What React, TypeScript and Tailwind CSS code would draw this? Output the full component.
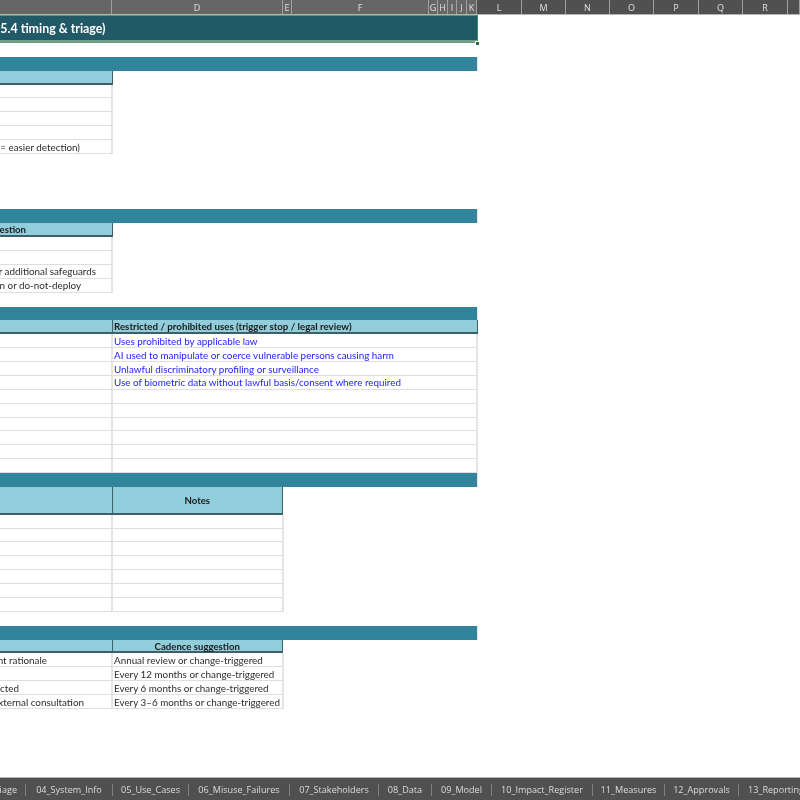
import type { ReactNode } from "react";

const columns = [
  { label: "", w: "w-[112px]", on: true },
  { label: "D", w: "w-[171px]", on: true },
  { label: "E", w: "w-[9px]", on: true },
  { label: "F", w: "w-[137px]", on: true },
  { label: "G", w: "w-[9px]", on: true },
  { label: "H", w: "w-[10px]", on: true },
  { label: "I", w: "w-[9px]", on: true },
  { label: "J", w: "w-[10px]", on: true },
  { label: "K", w: "w-[10px]", on: true },
  { label: "L", w: "w-[45px]", on: false },
  { label: "M", w: "w-[44px]", on: false },
  { label: "N", w: "w-[44px]", on: false },
  { label: "O", w: "w-[44px]", on: false },
  { label: "P", w: "w-[45px]", on: false },
  { label: "Q", w: "w-[44px]", on: false },
  { label: "R", w: "w-[45px]", on: false },
  { label: "", w: "w-[12px]", on: false },
];

const tabs = [
  { name: "iage", w: "w-[26px]", clip: true },
  { name: "04_System_Info", w: "w-[87px]" },
  { name: "05_Use_Cases", w: "w-[76px]" },
  { name: "06_Misuse_Failures", w: "w-[101px]" },
  { name: "07_Stakeholders", w: "w-[89px]" },
  { name: "08_Data", w: "w-[53px]" },
  { name: "09_Model", w: "w-[60px]" },
  { name: "10_Impact_Register", w: "w-[101px]" },
  { name: "11_Measures", w: "w-[72px]" },
  { name: "12_Approvals", w: "w-[74px]" },
];

const row = "h-[13.875px] shrink-0 flex";

function Blank({ n = 1 }: { n?: number }) {
  return <div className="shrink-0" style={{ height: n * 13.875 }} />;
}

function Bar() {
  return <div className="h-[13.875px] shrink-0 w-[477.5px] bg-[#31849b] border-r border-r-[#e4e4e4]" />;
}

// text that is cut off by the left edge of the window, so it hangs from its right end
function Clipped({ children, end, bold }: { children?: ReactNode; end: string; bold?: boolean }) {
  return (
    <div className={`${end} h-full flex justify-end items-center overflow-hidden whitespace-nowrap ${bold ? "font-bold" : ""}`}>
      <span className="shrink-0">{children}</span>
    </div>
  );
}

function Head({ children, w, center }: { children?: ReactNode; w: string; center?: boolean }) {
  return (
    <div className={`${w} h-full bg-[#92cddc] border-b-2 border-b-[#3f5f68] border-r border-r-[#3f5f68] flex items-center pt-[2px] font-bold text-[9.6px] text-[#1a1a1a] whitespace-nowrap ${center ? "justify-center" : "pl-[1.5px]"}`}>
      {children}
    </div>
  );
}

function Data({ left, endAt, right, rightW = "w-[170.5px]", blue }: { left?: string; endAt?: string; right?: string; rightW?: string; blue?: boolean }) {
  return (
    <div className={row}>
      <div className="w-[113px] h-full bg-white pt-[2px] border-b border-b-[#dedede] border-r-2 border-r-[#e4e4e4]">
        {left && <Clipped end={endAt ?? "w-[80px]"}>{left}</Clipped>}
      </div>
      {right !== undefined && (
        <div className={`${rightW} h-full bg-white pt-[2px] border-b border-b-[#dedede] border-r-2 border-r-[#e4e4e4] flex items-center pl-[1px] whitespace-nowrap ${blue ? "text-[#1c1cff]" : ""}`}>
          {right}
        </div>
      )}
    </div>
  );
}

export default function App() {
  return (
    <div className="w-[800px] h-[800px] relative overflow-hidden bg-white flex flex-col blur-[0.4px] font-['Lato',sans-serif] text-[9.85px] leading-none text-[#2c2c2c]">
      {/* column letters */}
      <div className="h-[15px] shrink-0 flex border-b border-b-[#b4b4b4] font-['Open_Sans',sans-serif] text-[9px] text-[#e0e0e0]">
        {columns.map((c, i) => (
          <div key={i} className={`${c.w} shrink-0 h-full flex items-center justify-center border-r border-r-[#a0a0a0] ${c.on ? "bg-[#666666]" : "bg-[#505050]"}`}>
            {c.label}
          </div>
        ))}
      </div>

      {/* title row */}
      <div className="h-[27.875px] shrink-0 w-[477.5px] bg-[#215967] border-t border-t-[#4f9a72] border-b-[3px] border-b-[#6f9f85] border-r border-r-[#3f8a63] flex">
        <div className="w-[105.5px] h-full flex justify-end items-center pt-[2px] overflow-hidden whitespace-nowrap text-[12.4px] font-bold text-white">
          <span className="shrink-0">5.4 timing &amp; triage)</span>
        </div>
      </div>

      <Blank />
      <Bar />
      <div className={row}>
        <Head w="w-[112.5px]" />
      </div>
      <Data />
      <Data />
      <Data />
      <Data />
      <Data left="= easier detection)" />

      <Blank n={4} />
      <Bar />
      <div className={row}>
        <Head w="w-[112.5px]">
          <div className="w-full -ml-[1.5px]">
            <Clipped end="w-[26px]">estion</Clipped>
          </div>
        </Head>
      </div>
      <Data />
      <Data />
      <Data left="r additional safeguards" endAt="w-[96px]" />
      <Data left="n or do-not-deploy" endAt="w-[81px]" />

      <Blank />
      <Bar />
      <div className={row}>
        <Head w="w-[112.5px]" />
        <Head w="w-[365px]">
          <span className="text-[9.72px]">Restricted / prohibited uses (trigger stop / legal review)</span>
        </Head>
      </div>
      <Data right="Uses prohibited by applicable law" rightW="w-[364.5px]" blue />
      <Data right="AI used to manipulate or coerce vulnerable persons causing harm" rightW="w-[364.5px]" blue />
      <Data right="Unlawful discriminatory profiling or surveillance" rightW="w-[364.5px]" blue />
      <Data right="Use of biometric data without lawful basis/consent where required" rightW="w-[364.5px]" blue />
      {[0, 1, 2, 3, 4, 5].map((i) => (
        <Data key={i} right="" rightW="w-[364.5px]" />
      ))}

      <Bar />
      <div className="h-[27.75px] shrink-0 flex">
        <Head w="w-[112.5px]" />
        <Head w="w-[170.5px]" center>
          Notes
        </Head>
      </div>
      {[0, 1, 2, 3, 4, 5, 6].map((i) => (
        <Data key={i} right="" />
      ))}

      <Blank />
      <Bar />
      <div className={row}>
        <Head w="w-[112.5px]" />
        <Head w="w-[170.5px]" center>
          Cadence suggestion
        </Head>
      </div>
      <Data left="nt rationale" endAt="w-[47px]" right="Annual review or change-triggered" />
      <Data right="Every 12 months or change-triggered" />
      <Data left="cted" endAt="w-[19px]" right="Every 6 months or change-triggered" />
      <Data left="xternal consultation" endAt="w-[84px]" right="Every 3–6 months or change-triggered" />

      <div className="flex-1" />

      {/* sheet tabs */}
      <div className="h-[23px] shrink-0 flex items-center pt-[1px] bg-[#505050] border-t border-t-[#b4b4b4] font-['Open_Sans',sans-serif] text-[9.1px] text-[#dcdcdc] whitespace-nowrap overflow-hidden">
        {tabs.map((t) => (
          <div key={t.name} className={`${t.w} shrink-0 h-[12px] flex items-center border-r border-r-[#808080] overflow-hidden ${t.clip ? "justify-end pr-[8px]" : "justify-center"}`}>
            <span className="shrink-0">{t.name}</span>
          </div>
        ))}
        <div className="pl-[9px] shrink-0">13_Reporting</div>
      </div>

      {/* fill handle of the selected cell */}
      <div className="absolute left-[475px] top-[40.5px] w-[3px] h-[3px] bg-[#217346] border border-white box-content" />
    </div>
  );
}
